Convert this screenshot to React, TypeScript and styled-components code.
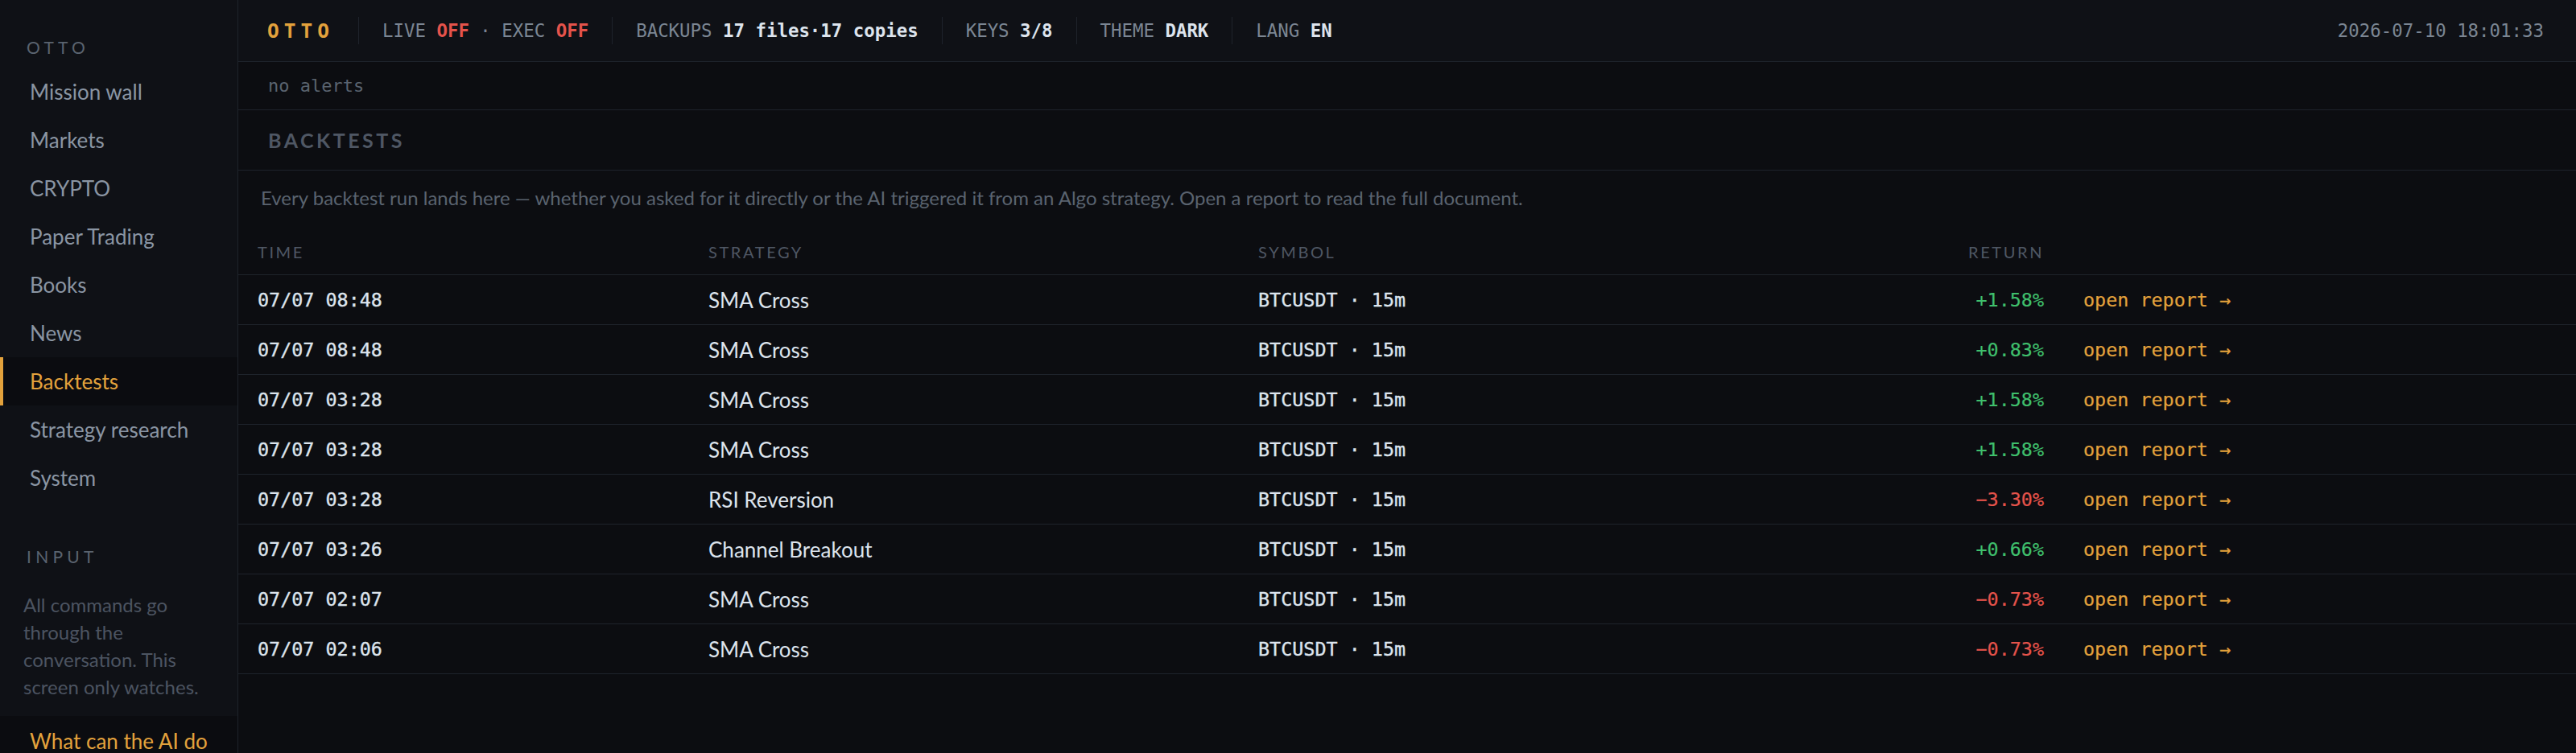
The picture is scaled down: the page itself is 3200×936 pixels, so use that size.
import React from 'react';
import styled, { createGlobalStyle } from 'styled-components';

const Colors = {
  page: '#0c0d11',
  panel: '#0f1116',
  line: '#1e232b',
  orange: '#e3a23c',
  red: '#e5534b',
  green: '#3fbf6c',
  text: '#dde4ed',
  muted: '#7b8693',
  nav: '#8a95a3',
  dim: '#4f5764',
  faint: '#5a636f',
};

const SANS = `Lato, "Noto Sans", sans-serif`;
const MONO = `"DejaVu Sans Mono", "Liberation Mono", monospace`;

const GlobalStyle = createGlobalStyle`
  * { box-sizing: border-box; }
  html, body { margin: 0; padding: 0; background: ${Colors.page}; }
  body { font-family: ${SANS}; color: ${Colors.text}; }
`;

const Shell = styled.div`
  display: flex;
  height: 936px;
  overflow: hidden;
  background: ${Colors.page};
`;

/* ---------- sidebar ---------- */

const Sidebar = styled.aside`
  width: 296px;
  flex-shrink: 0;
  display: flex;
  flex-direction: column;
  padding-top: 44px;
  background: ${Colors.panel};
  border-right: 1px solid ${Colors.line};
`;

const SideLabel = styled.div<{ top?: number }>`
  height: 30px;
  line-height: 30px;
  margin-top: ${({ top }) => top || 0}px;
  margin-bottom: 10px;
  padding-left: 33px;
  font-size: 21px;
  letter-spacing: 0.25em;
  color: ${Colors.faint};
`;

const NavItem = styled.div<{ active?: boolean }>`
  height: 60px;
  line-height: 60px;
  padding-left: 33px;
  border-left: 4px solid ${({ active }) => (active ? Colors.orange : 'transparent')};
  background: ${({ active }) => (active ? '#0b0c10' : 'transparent')};
  color: ${({ active }) => (active ? Colors.orange : Colors.nav)};
  font-size: 26px;
`;

const SideNote = styled.p`
  margin: 18px 0 0;
  padding: 0 29px;
  font-size: 24px;
  line-height: 34px;
  color: #4c5461;
`;

const AskBlock = styled.div`
  flex: 1;
  margin-top: 19px;
  padding: 14px 37px;
  background: #0b0c10;
  color: ${Colors.orange};
  font-size: 26px;
  line-height: 34px;
`;

/* ---------- main ---------- */

const Main = styled.main`
  flex: 1;
  min-width: 0;
  display: flex;
  flex-direction: column;
`;

const TopBar = styled.header`
  height: 77px;
  flex-shrink: 0;
  display: flex;
  align-items: center;
  padding: 0 40px 0 36px;
  background: ${Colors.panel};
  border-bottom: 1px solid ${Colors.line};
  font-family: ${MONO};
  font-size: 22.4px;
  white-space: pre;
`;

const Brand = styled.span`
  padding-right: 30px;
  color: ${Colors.orange};
  font-size: 24.5px;
  font-weight: 700;
  letter-spacing: 6px;
`;

const Segment = styled.span`
  display: flex;
  align-items: center;
  height: 34px;
  padding: 0 29px;
  border-left: 1px solid ${Colors.line};
  color: ${Colors.muted};
`;

const Val = styled.span<{ tone?: 'red' }>`
  color: ${({ tone }) => (tone === 'red' ? Colors.red : Colors.text)};
  font-weight: 700;
`;

const Stamp = styled.span`
  margin-left: auto;
  color: ${Colors.muted};
`;

const AlertBar = styled.div`
  height: 60px;
  flex-shrink: 0;
  display: flex;
  align-items: center;
  padding-left: 37px;
  border-bottom: 1px solid ${Colors.line};
  font-family: ${MONO};
  font-size: 22px;
  color: ${Colors.faint};
`;

const SectionHead = styled.h2`
  height: 75px;
  margin: 0;
  flex-shrink: 0;
  display: flex;
  align-items: center;
  padding-left: 37px;
  border-bottom: 1px solid ${Colors.line};
  font-size: 25px;
  font-weight: 700;
  letter-spacing: 0.14em;
  color: ${Colors.dim};
`;

const Intro = styled.p`
  margin: 0;
  padding: 17px 28px 22px;
  font-size: 24px;
  line-height: 34px;
  color: ${Colors.faint};
`;

const Grid = styled.div`
  display: grid;
  grid-template-columns: 560px 683px 837px 139px 1fr;
  align-items: center;
  padding-left: 24px;
  border-bottom: 1px solid ${Colors.line};
`;

const HeadRow = styled(Grid)`
  height: 57px;
  font-size: 20px;
  letter-spacing: 0.13em;
  color: ${Colors.dim};
`;

const Row = styled(Grid)`
  height: 62px;
  font-size: 26px;
`;

const Cell = styled.div<{ right?: boolean }>`
  text-align: ${({ right }) => (right ? 'right' : 'left')};
`;

const MonoCell = styled.div`
  font-family: ${MONO};
  font-size: 23.4px;
  color: ${Colors.text};
  -webkit-text-stroke: 0.35px currentColor;
`;

const Ret = styled.div<{ up: boolean }>`
  text-align: right;
  font-family: ${MONO};
  font-size: 23.4px;
  color: ${({ up }) => (up ? Colors.green : Colors.red)};
  -webkit-text-stroke: 0.2px currentColor;
`;

const ReportLink = styled.a`
  padding-left: 49px;
  font-family: ${MONO};
  font-size: 23.4px;
  color: ${Colors.orange};
  text-decoration: none;
  cursor: pointer;
  -webkit-text-stroke: 0.2px currentColor;
`;

type Run = { time: string; strategy: string; symbol: string; ret: number };

const runs: Run[] = [
  { time: '07/07 08:48', strategy: 'SMA Cross', symbol: 'BTCUSDT · 15m', ret: 1.58 },
  { time: '07/07 08:48', strategy: 'SMA Cross', symbol: 'BTCUSDT · 15m', ret: 0.83 },
  { time: '07/07 03:28', strategy: 'SMA Cross', symbol: 'BTCUSDT · 15m', ret: 1.58 },
  { time: '07/07 03:28', strategy: 'SMA Cross', symbol: 'BTCUSDT · 15m', ret: 1.58 },
  { time: '07/07 03:28', strategy: 'RSI Reversion', symbol: 'BTCUSDT · 15m', ret: -3.3 },
  { time: '07/07 03:26', strategy: 'Channel Breakout', symbol: 'BTCUSDT · 15m', ret: 0.66 },
  { time: '07/07 02:07', strategy: 'SMA Cross', symbol: 'BTCUSDT · 15m', ret: -0.73 },
  { time: '07/07 02:06', strategy: 'SMA Cross', symbol: 'BTCUSDT · 15m', ret: -0.73 },
];

const navItems = [
  'Mission wall',
  'Markets',
  'CRYPTO',
  'Paper Trading',
  'Books',
  'News',
  'Backtests',
  'Strategy research',
  'System',
];

const fmtRet = (v: number) => (v >= 0 ? '+' : '\u2212') + Math.abs(v).toFixed(2) + '%';

const App = () => {
  return (
    <Shell>
      <GlobalStyle />
      <Sidebar>
        <SideLabel>OTTO</SideLabel>
        {navItems.map((name) => (
          <NavItem key={name} active={name === 'Backtests'}>
            {name}
          </NavItem>
        ))}
        <SideLabel top={53}>INPUT</SideLabel>
        <SideNote>All commands go through the conversation. This screen only watches.</SideNote>
        <AskBlock>What can the AI do for me?</AskBlock>
      </Sidebar>

      <Main>
        <TopBar>
          <Brand>OTTO</Brand>
          <Segment>
            LIVE <Val tone="red">OFF</Val> · EXEC <Val tone="red">OFF</Val>
          </Segment>
          <Segment>
            BACKUPS <Val>17 files·17 copies</Val>
          </Segment>
          <Segment>
            KEYS <Val>3/8</Val>
          </Segment>
          <Segment>
            THEME <Val>DARK</Val>
          </Segment>
          <Segment>
            LANG <Val>EN</Val>
          </Segment>
          <Stamp>2026-07-10 18:01:33</Stamp>
        </TopBar>

        <AlertBar>no alerts</AlertBar>
        <SectionHead>BACKTESTS</SectionHead>
        <Intro>
          Every backtest run lands here — whether you asked for it directly or the AI triggered it from an
          Algo strategy. Open a report to read the full document.
        </Intro>

        <HeadRow>
          <Cell>TIME</Cell>
          <Cell>STRATEGY</Cell>
          <Cell>SYMBOL</Cell>
          <Cell right>RETURN</Cell>
          <Cell />
        </HeadRow>
        {runs.map((run, i) => (
          <Row key={i + 'run'}>
            <MonoCell>{run.time}</MonoCell>
            <Cell>{run.strategy}</Cell>
            <MonoCell>{run.symbol}</MonoCell>
            <Ret up={run.ret >= 0}>{fmtRet(run.ret)}</Ret>
            <ReportLink>open report →</ReportLink>
          </Row>
        ))}
      </Main>
    </Shell>
  );
};

export default App;
